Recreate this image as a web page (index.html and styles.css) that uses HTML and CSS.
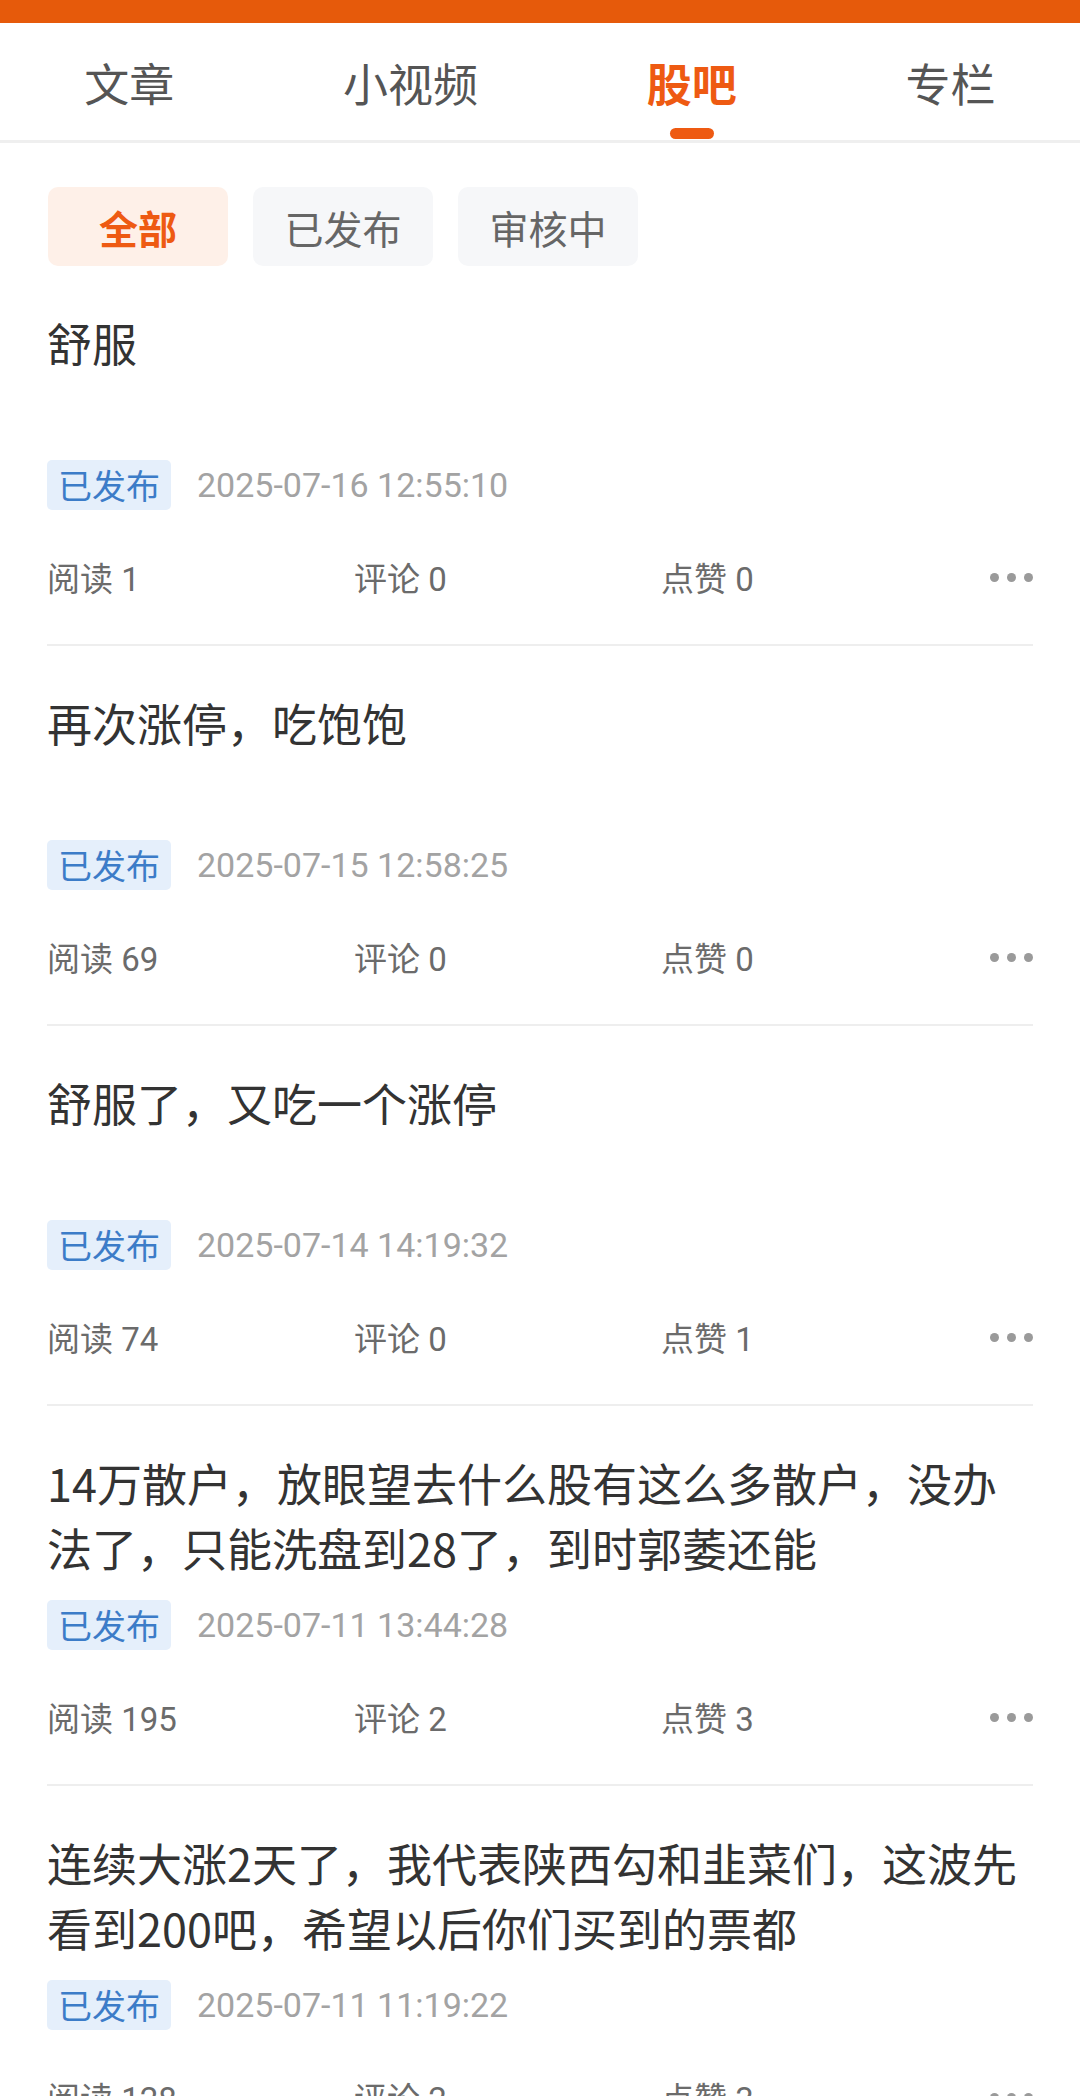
FILE: index.html
```html
<!DOCTYPE html>
<html lang="zh-CN">

<head>
    <meta charset="UTF-8">
    <meta name="viewport" content="width=device-width, initial-scale=1.0">
    <title>我的发布 - 股吧</title>
    <link rel="stylesheet" href="styles.css">
</head>

<body>
    <div class="status-bar"></div>

    <div class="tabs">
        <div class="tab">文章</div>
        <div class="tab">小视频</div>
        <div class="tab active">股吧<span class="tab-line"></span></div>
        <div class="tab">专栏</div>
    </div>

    <div class="filters">
        <div class="chip active">全部</div>
        <div class="chip">已发布</div>
        <div class="chip">审核中</div>
    </div>

    <div class="post-list">
        <div class="post">
            <div class="post-title">舒服</div>
            <div class="post-meta">
                <span class="badge">已发布</span>
                <span class="date">2025-07-16 12:55:10</span>
            </div>
            <div class="post-stats">
                <span class="stat">阅读 1</span>
                <span class="stat">评论 0</span>
                <span class="stat">点赞 0</span>
                <span class="more"><i></i><i></i><i></i></span>
            </div>
        </div>

        <div class="post">
            <div class="post-title">再次涨停，吃饱饱</div>
            <div class="post-meta">
                <span class="badge">已发布</span>
                <span class="date">2025-07-15 12:58:25</span>
            </div>
            <div class="post-stats">
                <span class="stat">阅读 69</span>
                <span class="stat">评论 0</span>
                <span class="stat">点赞 0</span>
                <span class="more"><i></i><i></i><i></i></span>
            </div>
        </div>

        <div class="post">
            <div class="post-title">舒服了，又吃一个涨停</div>
            <div class="post-meta">
                <span class="badge">已发布</span>
                <span class="date">2025-07-14 14:19:32</span>
            </div>
            <div class="post-stats">
                <span class="stat">阅读 74</span>
                <span class="stat">评论 0</span>
                <span class="stat">点赞 1</span>
                <span class="more"><i></i><i></i><i></i></span>
            </div>
        </div>

        <div class="post">
            <div class="post-title">14万散户，放眼望去什么股有这么多散户，没办法了，只能洗盘到28了，到时郭萎还能</div>
            <div class="post-meta">
                <span class="badge">已发布</span>
                <span class="date">2025-07-11 13:44:28</span>
            </div>
            <div class="post-stats">
                <span class="stat">阅读 195</span>
                <span class="stat">评论 2</span>
                <span class="stat">点赞 3</span>
                <span class="more"><i></i><i></i><i></i></span>
            </div>
        </div>

        <div class="post">
            <div class="post-title">连续大涨2天了，我代表陕西勾和韭菜们，这波先看到200吧，希望以后你们买到的票都</div>
            <div class="post-meta">
                <span class="badge">已发布</span>
                <span class="date">2025-07-11 11:19:22</span>
            </div>
            <div class="post-stats">
                <span class="stat">阅读 128</span>
                <span class="stat">评论 2</span>
                <span class="stat">点赞 3</span>
                <span class="more"><i></i><i></i><i></i></span>
            </div>
        </div>
    </div>
</body>

</html>
```

FILE: styles.css
```css
body {
    margin: 0;
    background-color: #fff;
    font-family: "Noto Sans CJK SC", sans-serif;
    color: #333;
}
.status-bar {
    height: 23px;
    background-color: #e65a0b; /* Orange top bar */
}

/* Top tabs */
.tabs {
    display: flex;
    justify-content: space-around;
    height: 117px;
    border-bottom: 3px solid #efefef;
}
.tab {
    display: flex;
    flex-direction: column;
    align-items: center;
    padding-top: 30px;
    font-size: 45px;
    line-height: 60px;
    color: #555;
}
.tab.active {
    color: #ee5a12;
    font-weight: bold;
}
.tab-line {
    width: 44px;
    height: 11px;
    margin-top: 15px;
    border-radius: 6px;
    background-color: #ee5a12;
}

/* Filter chips */
.filters {
    display: flex;
    gap: 25px;
    padding: 44px 47px 0 48px;
}
.chip {
    display: flex;
    align-items: center;
    justify-content: center;
    width: 180px;
    height: 79px;
    border-radius: 10px;
    background-color: #f6f7f9;
    font-size: 39px;
    color: #666;
}
.chip.active {
    background-color: #fef0e8;
    color: #ee5a12;
    font-weight: bold;
}

/* Post list */
.post {
    margin: 0 47px;
    padding: 44px 0 37px;
    border-bottom: 2px solid #eeeeee;
}
.post-title {
    height: 130px;
    font-size: 45px;
    line-height: 65px;
    color: #333;
    overflow: hidden;
    display: -webkit-box;
    -webkit-line-clamp: 2;
    -webkit-box-orient: vertical;
}
.post-meta {
    display: flex;
    align-items: center;
    height: 50px;
    margin-top: 20px;
}
.badge {
    height: 50px;
    padding: 0 11px;
    border-radius: 5px;
    background-color: #e5effb;
    color: #3c7cc8;
    font-size: 34px;
    line-height: 50px;
}
.date {
    margin-left: 26px;
    font-family: Roboto, "Noto Sans CJK SC", sans-serif;
    font-size: 34px;
    color: #a3a3a3;
}
.post-stats {
    display: flex;
    align-items: center;
    height: 60px;
    margin-top: 37px;
}
.stat {
    flex: 1;
    font-family: Roboto, "Noto Sans CJK SC", sans-serif;
    font-size: 33px;
    color: #6b6b6b;
}
.more {
    display: flex;
    justify-content: flex-end;
    gap: 8px;
    width: 65px;
}
.more i {
    width: 9px;
    height: 9px;
    border-radius: 50%;
    background-color: #9a9a9a;
}
```
